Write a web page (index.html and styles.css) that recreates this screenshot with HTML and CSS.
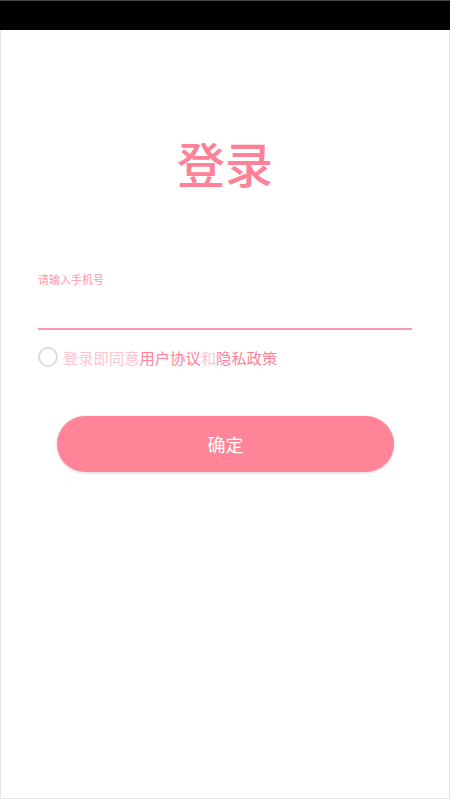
FILE: index.html
```html
<!DOCTYPE html>
<html lang="zh-CN">
<head>
<meta charset="utf-8">
<title>登录</title>
<link rel="stylesheet" href="styles.css">
</head>
<body>
<div class="screen">
  <div class="status-bar"></div>
  <main class="content">
    <h1 class="title">登录</h1>
    <div class="field">
      <label class="field-label">请输入手机号</label>
      <div class="field-input"></div>
    </div>
    <div class="agree">
      <span class="radio"></span>
      <span class="agree-text">登录即同意<span class="link">用户协议</span>和<span class="link">隐私政策</span></span>
    </div>
    <div class="btn-wrap">
      <button class="confirm">确定</button>
    </div>
  </main>
</div>
</body>
</html>
```
FILE: styles.css
```css
html, body {
  margin: 0;
  padding: 0;
  background: #ffffff;
}
body {
  font-family: "Noto Sans CJK SC", "Noto Sans", sans-serif;
}
.screen {
  width: 450px;
  height: 799px;
  box-sizing: border-box;
  border: 1px solid #e4e4e4;
  border-top: none;
  display: flex;
  flex-direction: column;
}
.status-bar {
  height: 30px;
  background: #000000;
  border-top: 1px solid #444;
  box-sizing: border-box;
  margin: 0 -1px;
}
.content {
  display: flex;
  flex-direction: column;
  padding: 0 37px;
}
.title {
  margin: 104px 0 0;
  font-size: 48px;
  line-height: 56px;
  font-weight: 500;
  color: #ff8197;
  text-align: center;
}
.field {
  margin-top: 81px;
  display: flex;
  flex-direction: column;
}
.field-label {
  font-size: 11px;
  line-height: 16px;
  color: #ff97aa;
}
.field-input {
  height: 41px;
  border-bottom: 2px solid #ff9aac;
}
.agree {
  margin-top: 16px;
  display: flex;
  align-items: center;
  gap: 5px;
}
.radio {
  width: 16px;
  height: 16px;
  border: 2px solid #dcdcdc;
  border-radius: 50%;
  flex: none;
}
.agree-text {
  font-size: 15.3px;
  line-height: 22px;
  color: #ffc3cd;
}
.link {
  color: #ff8299;
}
.btn-wrap {
  margin-top: 48px;
  padding: 0 18px 0 19px;
}
.confirm {
  width: 100%;
  height: 56px;
  border: none;
  border-radius: 28px;
  background: #ff8497;
  color: #ffffff;
  font-family: "Noto Sans CJK SC", "Noto Sans", sans-serif;
  font-size: 18px;
  box-shadow: 0 1px 3px rgba(0,0,0,0.18);
  padding: 0;
}
```
